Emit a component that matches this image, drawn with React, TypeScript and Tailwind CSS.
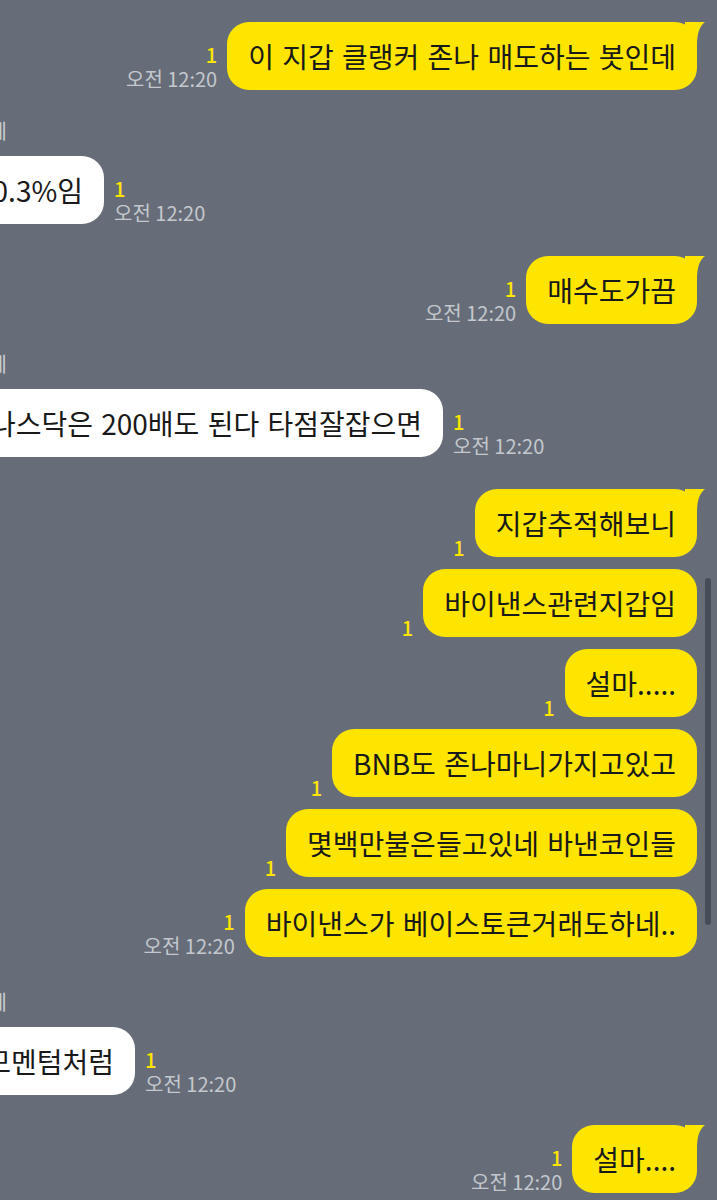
import type { ReactNode } from "react";

const FONT = "font-['Noto_Sans_CJK_KR','Noto_Sans',sans-serif]";

function Tail() {
  return (
    <svg
      className="absolute top-0 -right-[8px]"
      width="20"
      height="24"
      viewBox="0 0 20 24"
    >
      <path d="M0 0 L20 0 C15 4 12 10 12 24 L0 24 Z" fill="#fee500" />
    </svg>
  );
}

function Meta({ time, align }: { time?: boolean; align: "left" | "right" }) {
  return (
    <div
      className={`flex flex-col -mb-[2px] ${align === "right" ? "items-end mr-[10px]" : "items-start ml-[10px]"}`}
    >
      <span className="text-[20px] leading-[22px] font-medium text-[#fee500]">1</span>
      {time && (
        <span className="text-[20px] leading-[26px] text-[#c4c8ce]">
          오전 12:20
        </span>
      )}
    </div>
  );
}

function Sent({
  children,
  time,
  tail,
  className = "",
}: {
  children: ReactNode;
  time?: boolean;
  tail?: boolean;
  className?: string;
}) {
  return (
    <div className={`flex justify-end items-end pr-[20px] ${className}`}>
      <Meta time={time} align="right" />
      <div className="relative shrink-0">
        {tail && <Tail />}
        <div className="relative rounded-[22px] bg-[#fee500] px-[21px] py-[15px] text-[28px] leading-[38px] [word-spacing:2px] text-[#191919] whitespace-nowrap">
          {children}
        </div>
      </div>
    </div>
  );
}

function Received({
  children,
  edge,
  className = "",
}: {
  children: ReactNode;
  edge: string;
  className?: string;
}) {
  return (
    <div className={`flex flex-col ${className}`}>
      <div className="w-[7px] flex justify-end overflow-visible">
        <span className="shrink-0 text-[20px] leading-[24px] text-[#c9cdd3]">제</span>
      </div>
      <div className="flex items-end mt-[13px]">
        <div className={`${edge} flex justify-end shrink-0`}>
          <div className="shrink-0 rounded-[22px] bg-white pl-[60px] pr-[21px] py-[15px] text-[28px] leading-[38px] [word-spacing:2px] text-[#191919] whitespace-nowrap">
            {children}
          </div>
        </div>
        <Meta time align="left" />
      </div>
    </div>
  );
}

export default function App() {
  return (
    <div className={`relative w-[717px] h-[1200px] overflow-hidden bg-[#666d78] ${FONT}`}>
      <div className="flex flex-col pt-[22px]">
        <Sent time tail>
          이 지갑 클랭커 존나 매도하는 봇인데
        </Sent>

        <Received edge="w-[104px]" className="mt-[29px]">
          0.3%임
        </Received>

        <Sent time tail className="mt-[32px]">
          매수도가끔
        </Sent>

        <Received edge="w-[443px]" className="mt-[28px]">
          나스닥은 200배도 된다 타점잘잡으면
        </Received>

        <div className="flex flex-col gap-[12px] mt-[32px]">
          <Sent tail>지갑추적해보니</Sent>
          <Sent>바이낸스관련지갑임</Sent>
          <Sent>설마.....</Sent>
          <Sent>BNB도 존나마니가지고있고</Sent>
          <Sent>몇백만불은들고있네 바낸코인들</Sent>
          <Sent time>바이낸스가 베이스토큰거래도하네..</Sent>
        </div>

        <Received edge="w-[135px]" className="mt-[33px]">
          모멘텀처럼
        </Received>

        <Sent time tail className="mt-[30px]">
          설마....
        </Sent>
      </div>

      {/* scrollbar */}
      <div className="absolute right-[6px] top-[578px] h-[347px] w-[6px] rounded-full bg-[#474d56]" />
    </div>
  );
}
